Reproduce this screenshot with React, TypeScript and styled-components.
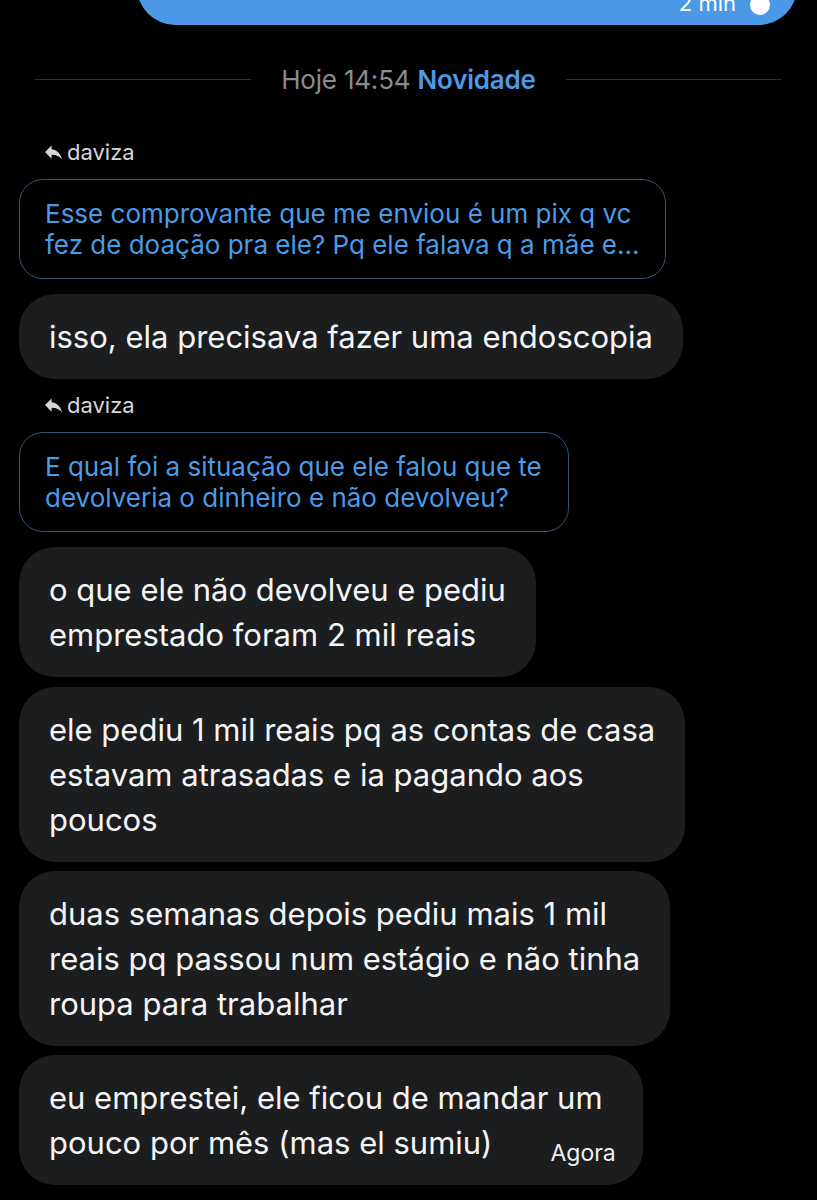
import React from "react";
import styled, { createGlobalStyle } from "styled-components";

const Global = createGlobalStyle`
  html, body { margin: 0; padding: 0; background: #000; }
  body { font-family: Inter, "Noto Sans", "Liberation Sans", sans-serif; -webkit-font-smoothing: antialiased; }
`;

const Page = styled.div`
  width: 817px;
  height: 1200px;
  overflow: hidden;
  background: #000;
  display: flex;
  flex-direction: column;
  align-items: flex-start;
  padding: 0 0 0 19px;
  box-sizing: border-box;
`;

const OutBubble = styled.div`
  align-self: flex-end;
  margin-right: 20px;
  margin-top: -35px;
  width: 660px;
  height: 60px;
  box-sizing: border-box;
  background: #4b99e6;
  border-radius: 0 0 38px 38px;
  display: flex;
  justify-content: flex-end;
  align-items: flex-end;
  gap: 14px;
  padding: 0 27px 10px 0;
`;

const OutMeta = styled.span`
  color: #fff;
  font-size: 22px;
  line-height: 22px;
  margin-bottom: 1px;
`;

const Check = styled.span`
  width: 20px;
  height: 20px;
  border-radius: 50%;
  background: #fff;
  display: block;
`;

const Divider = styled.div`
  align-self: stretch;
  margin: 39px 35px 0 16px;
  height: 30px;
  display: flex;
  align-items: center;
  gap: 30px;
  &::before, &::after {
    content: "";
    flex: 1;
    height: 1px;
    background: #2e2e30;
  }
`;

const DividerText = styled.span`
  font-size: 26px;
  color: #8b8b8d;
  white-space: nowrap;
  letter-spacing: -0.2px;
`;

const NewTag = styled.span`
  color: #4b9be6;
  font-weight: 600;
`;

const ReplyLabel = styled.div<{ $top: number }>`
  margin: ${(p) => p.$top}px 0 13px 26px;
  height: 28px;
  display: flex;
  align-items: center;
  gap: 5px;
  color: #d6d6d8;
  font-size: 22px;
  line-height: 28px;
`;

const Quote = styled.div`
  box-sizing: border-box;
  border: 1.5px solid #335578;
  border-radius: 24px;
  padding: 18px 26px 18px 25px;
  color: #4b9be6;
  font-size: 26px;
  line-height: 31px;
  white-space: nowrap;
`;

const Bubble = styled.div<{ $gap: number }>`
  margin-top: ${(p) => p.$gap}px;
  box-sizing: border-box;
  background: #1c1d1f;
  border-radius: 36px;
  padding: 20px 30px 20px 30px;
  color: #f5f5f7;
  font-size: 31px;
  line-height: 45px;
  white-space: nowrap;
`;

const LastLine = styled.div`
  display: flex;
  align-items: flex-end;
  gap: 58px;
`;

const Time = styled.span`
  font-size: 23px;
  line-height: 23px;
  color: #f0f0f2;
  margin-bottom: 0px;
  margin-right: -3px;
`;

const ReplyIcon = () => (
  <svg width="17" height="15" viewBox="3 5 18 15" fill="#d6d6d8">
    <path d="M10 9V5l-7 7 7 7v-4.1c5 0 8.5 1.6 11 5.1-1-5-4-10-11-11z" />
  </svg>
);

export default function App() {
  return (
    <>
      <Global />
      <Page>
        <OutBubble>
          <OutMeta>2 min</OutMeta>
          <Check />
        </OutBubble>
        <Divider>
          <DividerText>
            Hoje 14:54 <NewTag>Novidade</NewTag>
          </DividerText>
        </Divider>
        <ReplyLabel $top={44}>
          <ReplyIcon />
          daviza
        </ReplyLabel>
        <Quote>
          Esse comprovante que me enviou é um pix q vc
          <br />
          fez de doação pra ele? Pq ele falava q a mãe e...
        </Quote>
        <Bubble $gap={15}>isso, ela precisava fazer uma endoscopia</Bubble>
        <ReplyLabel $top={12}>
          <ReplyIcon />
          daviza
        </ReplyLabel>
        <Quote>
          E qual foi a situação que ele falou que te
          <br />
          devolveria o dinheiro e não devolveu?
        </Quote>
        <Bubble $gap={15}>
          o que ele não devolveu e pediu
          <br />
          emprestado foram 2 mil reais
        </Bubble>
        <Bubble $gap={10}>
          ele pediu 1 mil reais pq as contas de casa
          <br />
          estavam atrasadas e ia pagando aos
          <br />
          poucos
        </Bubble>
        <Bubble $gap={9}>
          duas semanas depois pediu mais 1 mil
          <br />
          reais pq passou num estágio e não tinha
          <br />
          roupa para trabalhar
        </Bubble>
        <Bubble $gap={9}>
          eu emprestei, ele ficou de mandar um
          <LastLine>
            <span>pouco por mês (mas el sumiu)</span>
            <Time>Agora</Time>
          </LastLine>
        </Bubble>
      </Page>
    </>
  );
}
